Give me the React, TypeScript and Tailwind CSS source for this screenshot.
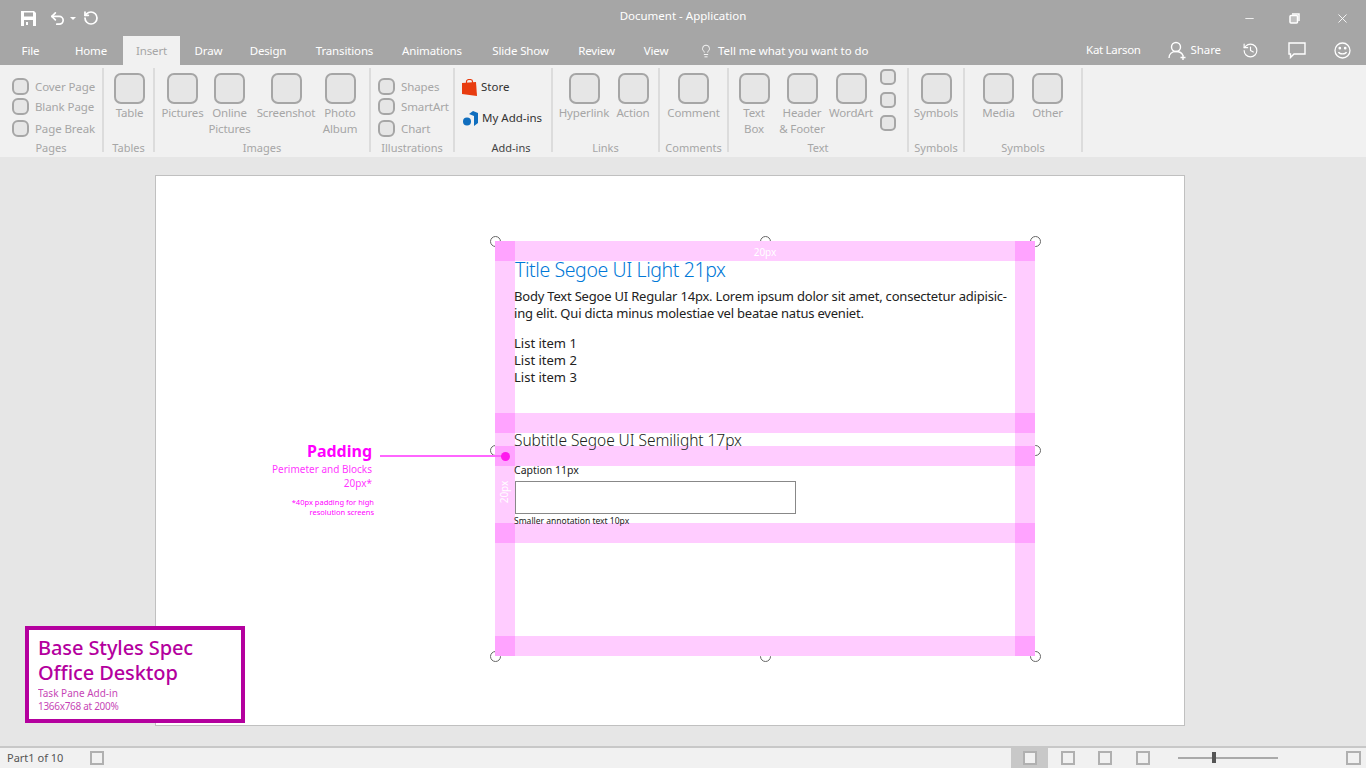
import React from 'react';
import { Undo2, RotateCcw, Lightbulb, History, X, Minus } from 'lucide-react';

const tabs = [
    { label: 'File', w: 'ml-[8px] w-[45px]' },
    { label: 'Home', w: 'ml-[8px] w-[60px]' },
    { label: 'Insert', w: 'ml-[2px] w-[57px] bg-[#f1f1f1] text-[#a6a6a6]' },
    { label: 'Draw', w: 'w-[57px]' },
    { label: 'Design', w: 'w-[62px]' },
    { label: 'Transitions', w: 'w-[91px]' },
    { label: 'Animations', w: 'w-[84px]' },
    { label: 'Slide Show', w: 'w-[93px]' },
    { label: 'Review', w: 'w-[59px]' },
    { label: 'View', w: 'w-[60px]' },
];

function Box({ className }: { className: string }) {
    return <div className={`shrink-0 border-2 border-[#a6a6a6] bg-[#e6e6e6] ${className}`} />;
}

function BigButton({ label, w }: { label: string; w: string }) {
    return (
        <div className={`flex flex-col items-center ${w}`}>
            <Box className="h-[31px] w-[31px] rounded-[7px]" />
            <div className="mt-[1px] whitespace-pre text-center text-[11.5px] leading-[16px] tracking-[-0.15px] text-[#a6a6a6]">{label}</div>
        </div>
    );
}

function SmallRow({ label, className }: { label: string; className: string }) {
    return (
        <div className={`flex items-center gap-[6px] ${className}`}>
            <Box className="h-[17px] w-[17px] rounded-[6px]" />
            <span className="whitespace-nowrap text-[11.5px] tracking-[-0.1px] text-[#a6a6a6]">{label}</span>
        </div>
    );
}

function Group({ w, label, children, labelClass }: { w: string; label: string; children: React.ReactNode; labelClass?: string }) {
    return (
        <div className={`flex h-[84px] shrink-0 flex-col border-r-2 border-[#dcdcdc] ${w}`}>
            <div className="flex h-[72px] shrink-0 items-start">{children}</div>
            <div className={`shrink-0 whitespace-nowrap text-center text-[11px] leading-[16px] ${labelClass ?? 'text-[#a6a6a6]'}`}>{label}</div>
        </div>
    );
}

function Handle({ className }: { className: string }) {
    return <div className={`absolute h-[11px] w-[11px] rounded-full border-[1.5px] border-[#666666] bg-white ${className}`} />;
}

function Square({ className }: { className?: string }) {
    return <div className={`h-[14px] w-[14px] border-2 border-[#b0b0b0] bg-[#f1f1f1] ${className ?? ''}`} />;
}

export default function App() {
    return (
        <div className="flex h-[768px] w-[1366px] flex-col overflow-hidden bg-[#e6e6e6] [font-family:'Noto_Sans',sans-serif]">

            {/* Title bar */}
            <header className="h-[65px] shrink-0 bg-[#a6a6a6] text-white">
                <div className="relative flex h-[36px] items-center">
                    <svg className="ml-[21px] h-[15px] w-[15px]" viewBox="0 0 15 15" fill="white">
                        <path d="M0 0h13l2 2v13H0z M3 1.500v4h9v-4z M3 9v6h9V9z" fillRule="evenodd" />
                        <rect x="5" y="11" width="2" height="3" />
                    </svg>
                    <Undo2 className="ml-[13px] h-[17px] w-[17px]" strokeWidth={2.4} />
                    <svg className="ml-[4px] mt-[1px] h-[3px] w-[6px]" viewBox="0 0 6 3" fill="white"><path d="M0 0h6L3 3z" /></svg>
                    <RotateCcw className="ml-[7px] h-[16px] w-[16px]" strokeWidth={2.6} />
                    <div className="absolute left-0 right-0 top-[7px] text-center text-[11.5px] leading-[18px]">Document - Application</div>
                    <div className="ml-auto flex items-center">
                        <Minus className="mr-[33px] h-[13px] w-[13px]" strokeWidth={1.5} />
                        <svg className="mr-[35px] h-[11px] w-[11px]" viewBox="0 0 11 11" fill="none" stroke="white" strokeWidth="1.5">
                            <rect x="1" y="2.500" width="7.500" height="7.500" rx="1" fill="white" fillOpacity="0.3" />
                            <path d="M3 1h7v7" />
                        </svg>
                        <X className="mr-[16px] h-[15px] w-[15px]" strokeWidth={1.4} />
                    </div>
                </div>
                <div className="flex h-[29px] items-stretch text-[11.5px]">
                    {tabs.map((t) => (
                        <div key={t.label} className={`flex items-center justify-center whitespace-nowrap pt-[1px] tracking-[-0.15px] ${t.w}`}>{t.label}</div>
                    ))}
                    <div className="ml-[13px] flex items-center gap-[5px] pt-[1px]">
                        <Lightbulb className="h-[16px] w-[14px]" strokeWidth={1.5} />
                        <span className="whitespace-nowrap tracking-[-0.05px]">Tell me what you want to do</span>
                    </div>
                    <div className="ml-auto flex items-center pb-[1px]">
                        <span className="tracking-[-0.3px]">Kat Larson</span>
                        <svg className="ml-[27px] h-[19px] w-[19px]" viewBox="0 0 19 19" fill="none" stroke="white" strokeWidth="1.400">
                            <circle cx="8" cy="6" r="4.500" />
                            <path d="M1 17c0-4 3-6.500 7-6.500s6 1.500 7 4" />
                            <path d="M15 14v5M12.500 16.500h5" />
                        </svg>
                        <span className="ml-[4px] tracking-[-0.1px]">Share</span>
                        <History className="ml-[21px] h-[17px] w-[17px]" strokeWidth={1.6} />
                        <svg className="ml-[29px] h-[17px] w-[18px]" viewBox="0 0 18 17" fill="none" stroke="white" strokeWidth="1.400">
                            <path d="M1 1h16v11H6l-3.500 3.500V12H1z" />
                        </svg>
                        <svg className="ml-[28px] mr-[15px] h-[17px] w-[17px]" viewBox="0 0 17 17" fill="none" stroke="white" strokeWidth="1.300">
                            <circle cx="8.500" cy="8.500" r="7.500" />
                            <path d="M4.500 10c1 2.500 7 2.500 8 0" />
                            <circle cx="5.800" cy="6.200" r="0.700" fill="white" />
                            <circle cx="11.200" cy="6.200" r="0.700" fill="white" />
                        </svg>
                    </div>
                </div>
            </header>

            {/* Ribbon */}
            <nav className="flex h-[92px] shrink-0 bg-[#f1f1f1] pt-[3px]">
                <Group w="w-[104px]" label="Pages">
                    <div className="pl-[12px] pt-[10px]">
                        <SmallRow label="Cover Page" className="h-[17px]" />
                        <SmallRow label="Blank Page" className="mt-[3px] h-[17px]" />
                        <SmallRow label="Page Break" className="mt-[5px] h-[17px]" />
                    </div>
                </Group>
                <Group w="w-[51px]" label="Tables">
                    <div className="w-full pt-[5px]"><BigButton label="Table" w="ml-[1px] w-full" /></div>
                </Group>
                <Group w="w-[216px]" label="Images">
                    <div className="flex pl-[5px] pt-[5px]">
                        <BigButton label="Pictures" w="w-[45px]" />
                        <BigButton label={'Online\nPictures'} w="ml-[1px] w-[47px]" />
                        <BigButton label="Screenshot" w="ml-[2px] w-[62px]" />
                        <BigButton label={'Photo\nAlbum'} w="ml-[1px] w-[44px]" />
                    </div>
                </Group>
                <Group w="w-[84px]" label="Illustrations">
                    <div className="pl-[7px] pt-[10px]">
                        <SmallRow label="Shapes" className="h-[17px]" />
                        <SmallRow label="SmartArt" className="mt-[3px] h-[17px]" />
                        <SmallRow label="Chart" className="mt-[5px] h-[17px]" />
                    </div>
                </Group>
                <Group w="w-[98px]" label="Add-ins" labelClass="pl-[16px] text-[#444444]">
                    <div className="pl-[7px] pt-[11px] text-[11.5px] text-[#333333]">
                        <div className="flex h-[16px] items-center gap-[4px]">
                            <svg className="h-[17px] w-[15px]" viewBox="0 0 15 17">
                                <path d="M0 4l14-1 1 14-15-2z" fill="#e83c10" />
                                <path d="M4.500 4V2.500C4.500 1 6 .5 7.500 .5S10.500 1 10.500 2.500V4" fill="none" stroke="#e83c10" strokeWidth="1.200" />
                            </svg>
                            <span>Store</span>
                        </div>
                        <div className="mt-[15px] flex h-[16px] items-center gap-[4px] pl-[1px]">
                            <svg className="h-[15px] w-[15px]" viewBox="0 0 15 15" fill="#106ebe">
                                <path d="M6 3l4-3 5 2v10l-4 3V5z" />
                                <circle cx="4" cy="10.500" r="4" />
                            </svg>
                            <span>My Add-ins</span>
                        </div>
                    </div>
                </Group>
                <Group w="w-[107px]" label="Links">
                    <div className="flex pl-[5px] pt-[5px]">
                        <BigButton label="Hyperlink" w="w-[52px]" />
                        <BigButton label="Action" w="ml-[-1px] w-[48px]" />
                    </div>
                </Group>
                <Group w="w-[69px]" label="Comments">
                    <div className="w-full pt-[5px]"><BigButton label="Comment" w="w-full" /></div>
                </Group>
                <Group w="w-[180px]" label="Text">
                    <div className="relative flex pl-[3px] pt-[5px]">
                        <BigButton label={'Text\nBox'} w="w-[44px]" />
                        <BigButton label={'Header\n& Footer'} w="ml-[3px] w-[46px]" />
                        <BigButton label="WordArt" w="ml-[1px] w-[50px]" />
                        <div className="ml-[4px] mt-[-4px] flex flex-col gap-[7px]">
                            <Box className="h-[16px] w-[16px] rounded-[5px]" />
                            <Box className="h-[16px] w-[16px] rounded-[5px]" />
                            <Box className="h-[16px] w-[16px] rounded-[5px]" />
                        </div>
                    </div>
                </Group>
                <Group w="w-[56px]" label="Symbols">
                    <div className="w-full pt-[5px]"><BigButton label="Symbols" w="w-full" /></div>
                </Group>
                <Group w="w-[118px]" label="Symbols">
                    <div className="flex pl-[10px] pt-[5px]">
                        <BigButton label="Media" w="w-[47px]" />
                        <BigButton label="Other" w="ml-[2px] w-[47px]" />
                    </div>
                </Group>
            </nav>

            {/* Canvas */}
            <main className="relative flex-1 pl-[155px] pt-[18px]">
                <div className="relative h-[551px] w-[1030px] border border-[#c0c0c0] bg-white">

                    <Handle className="left-[334px] top-[60px]" />
                    <Handle className="left-[604px] top-[60px]" />
                    <Handle className="left-[874px] top-[60px]" />
                    <Handle className="left-[334px] top-[269px]" />
                    <Handle className="left-[874px] top-[269px]" />
                    <Handle className="left-[334px] top-[475px]" />
                    <Handle className="left-[604px] top-[475px]" />
                    <Handle className="left-[874px] top-[475px]" />

                    {/* Task pane mock, on the free canvas of the slide */}
                    <section className="absolute left-[339px] top-[65px] h-[415px] w-[540px] bg-white text-[#222222]">
                        <div className="absolute inset-y-0 left-0 w-[20px] bg-[#ff00ff]/20" />
                        <div className="absolute inset-y-0 right-0 w-[20px] bg-[#ff00ff]/20" />
                        <div className="absolute inset-x-0 top-0 h-[20px] bg-[#ff00ff]/20" />
                        <div className="absolute inset-x-0 top-[172px] h-[20px] bg-[#ff00ff]/20" />
                        <div className="absolute inset-x-0 top-[205px] h-[20px] bg-[#ff00ff]/20" />
                        <div className="absolute inset-x-0 top-[282px] h-[20px] bg-[#ff00ff]/20" />
                        <div className="absolute inset-x-0 bottom-0 h-[20px] bg-[#ff00ff]/20" />
                        <div className="absolute inset-x-0 top-[4px] text-center text-[10px] leading-[14px] text-white">20px</div>
                        <div className="absolute left-[-2px] top-[244px] -rotate-90 text-[10px] leading-[14px] text-white">20px</div>

                        <div className="relative pl-[19px] pt-[15px]">
                            <h1 className="pl-[1px] text-[19.500px] font-light leading-[28px] tracking-[-0.4px] text-[#0078d7]">Title Segoe UI Light 21px</h1>
                            <p className="mt-[4px] w-[510px] text-[13px] leading-[17px] tracking-[-0.2px]">Body Text Segoe UI Regular 14px. Lorem ipsum dolor sit amet, consectetur adipisic-<br />ing elit. Qui dicta minus molestiae vel beatae natus eveniet.</p>
                            <ul className="mt-[13px] text-[13px] leading-[17px]">
                                <li>List item 1</li>
                                <li>List item 2</li>
                                <li>List item 3</li>
                            </ul>
                            <h2 className="mt-[43px] text-[15.500px] font-light leading-[23px] tracking-[-0.05px]">Subtitle Segoe UI Semilight 17px</h2>
                            <div className="mt-[11px] text-[10.500px] leading-[15px]">Caption 11px</div>
                            <div className="ml-[1px] mt-[3px] h-[33px] w-[281px] border border-[#888888] bg-white" />
                            <div className="mt-[1px] text-[8.500px] leading-[11px]">Smaller annotation text 10px</div>
                        </div>
                    </section>

                    {/* Padding callout */}
                    <div className="absolute left-[100px] top-[265px] w-[116px] text-right text-[#ff00ff]">
                        <div className="text-[16px] font-bold leading-[20px]">Padding</div>
                        <div className="mt-[1px] whitespace-nowrap text-[10px] leading-[14px] opacity-80">Perimeter and Blocks</div>
                        <div className="text-[10px] leading-[14px] opacity-80">20px*</div>
                        <div className="ml-[-20px] mr-[-2px] mt-[8px] text-[7.500px] leading-[9.500px]">*40px padding for high<br />resolution screens</div>
                    </div>
                    <div className="absolute left-[224px] top-[279px] h-[2px] w-[125px] bg-[#ff66ff]" />
                    <div className="absolute left-[345px] top-[276px] h-[9px] w-[9px] rounded-full bg-[#ff19ee]" />
                </div>

                {/* Spec label */}
                <div className="absolute left-[25px] top-[469px] h-[97px] w-[220px] border-[4px] border-[#b4009e] bg-white pl-[9px] pt-[5px] text-[#b4009e]">
                    <div className="text-[20px] font-medium leading-[25px] tracking-[-0.1px]">Base Styles Spec</div>
                    <div className="text-[20px] font-medium leading-[25px] tracking-[-0.1px]">Office Desktop</div>
                    <div className="mt-[2px] text-[10px] leading-[13px] opacity-75">Task Pane Add-in</div>
                    <div className="text-[10px] leading-[13px] tracking-[-0.3px] opacity-75">1366x768 at 200%</div>
                </div>
            </main>

            {/* Status bar */}
            <footer className="flex h-[22px] shrink-0 items-center border-t-2 border-[#c8c8c8] bg-[#f1f1f1] text-[11px] text-[#555555]">
                <span className="ml-[7px] w-[83px]">Part1 of 10</span>
                <Square />
                <div className="ml-[907px] flex h-full w-[37px] items-center justify-center bg-[#c8c8c8]">
                    <Square className="bg-[#c8c8c8]" />
                </div>
                <Square className="ml-[13px]" />
                <Square className="ml-[23px]" />
                <Square className="ml-[24px]" />
                <div className="relative ml-[28px] h-[2px] w-[100px] bg-[#aaaaaa]">
                    <div className="absolute left-[34px] top-[-5px] h-[11px] w-[4px] bg-[#555555]" />
                </div>
                <Square className="ml-[68px] w-[15px]" />
            </footer>
        </div>
    );
}
